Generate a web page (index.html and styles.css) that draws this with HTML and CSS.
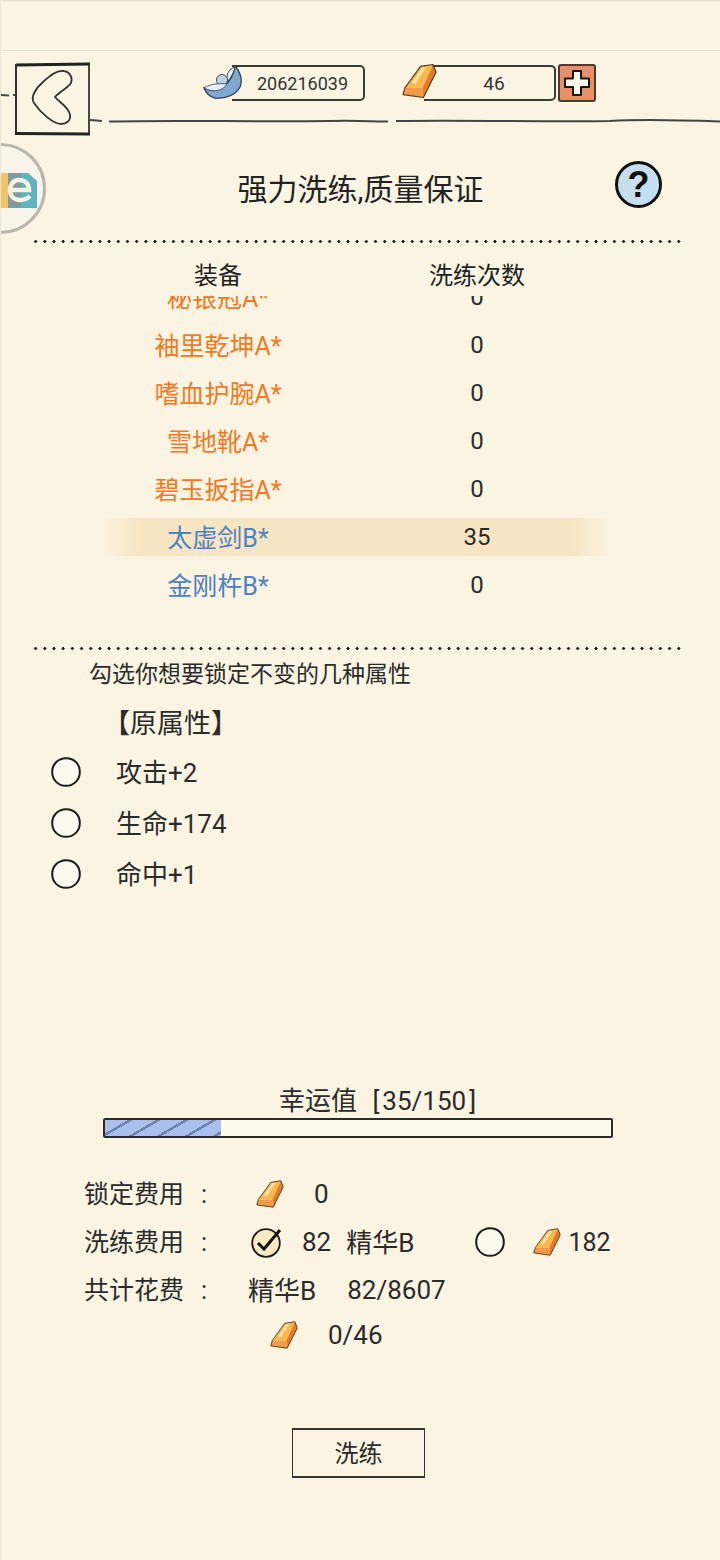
FILE: index.html
```html
<!DOCTYPE html>
<html lang="zh-CN">
<head>
  <meta charset="UTF-8" />
  <meta name="viewport" content="width=device-width, initial-scale=1" />
  <title>强力洗练</title>
  <link rel="stylesheet" href="styles.css">
</head>
<body>
  <svg class="defs" width="0" height="0" aria-hidden="true">
    <symbol id="ingot" viewBox="0 0 36 36">
      <path d="M3 25 L19 3 L32 1 L21 25 Z" fill="#f9b84a" />
      <path d="M10 20 L21 4 L25 3.5 L14 21 Z" fill="#fde2a0" />
      <path d="M32 1 L35 9 L22 35 L21 25 Z" fill="#e57a2e" />
      <path d="M3 25 L21 25 L22 35 L1 32 Z" fill="#f29a4a" />
      <path d="M3 25 L19 3 L32 1 L35 9 L22 35 L1 32 Z" fill="none" stroke="#5c3c1c" stroke-width="1.2" stroke-linejoin="round" />
    </symbol>
    <symbol id="ring" viewBox="0 0 30 30">
      <path d="M15 1.2 C23 1 28.8 7 28.8 15 C28.8 23 23 28.8 15 28.8 C7 28.8 1.2 23 1.2 15 C1.2 7 7 1.4 15 1.2 Z" fill="#fdf9ef" stroke="#1c1c1c" stroke-width="2" />
    </symbol>
  </svg>

  <div class="status"></div>

  <!-- floating tab on the left edge -->
  <div class="float-tab">
    <svg width="46" height="40" viewBox="0 0 46 40">
      <rect x="0" y="3" width="8" height="35" fill="#f2c268" />
      <path d="M8 3 H28 L37 11 V38 H8 Z" fill="#5fb3bf" />
      <path d="M8 3 H21 V38 H8 Z" fill="#7d9ba0" />
      <path d="M12 20 H29 C29 12 23 10 19 10 C13 10 10 15 10 20 C10 26 14 30 20 30 C24 30 27 29 30 26" fill="none" stroke="#f7f3e6" stroke-width="4.5" />
    </svg>
  </div>

  <header class="topbar">
    <svg class="stub" width="15" height="72" viewBox="0 0 15 72">
      <path d="M0 33 L9 33.5 M13 33 L15 33" stroke="#444" stroke-width="2" fill="none" />
    </svg>
    <svg class="back" width="75" height="74" viewBox="0 0 75 74">
      <path d="M1 3 L75 2" stroke="#222" stroke-width="3" />
      <path d="M1 2 L1 72" stroke="#333" stroke-width="2" />
      <path d="M74 2 L74 72" stroke="#333" stroke-width="1.8" />
      <path d="M0 71.5 L75 72" stroke="#222" stroke-width="3" />
      <path d="M28 20 C36 12 44 8 49 9 C55 10 58 16 56 21 C53 26 44 30 40 35 C44 40 54 45 55 53 C56 59 51 62 46 62 C38 62 25 50 19 41 C15 35 21 26 28 20 Z" fill="none" stroke="#333" stroke-width="1.8" />
    </svg>
    <div class="topbar-main">
      <div class="currencies">
        <svg class="silver" width="39" height="36" viewBox="0 0 39 36">
          <path d="M1 23 C8 27 20 24 26 16 C29 12 31 6 32 1 C37 6 40 15 37 22 C33 30 22 34 12 33 C7 32 3 28 1 23 Z" fill="#7fa9d0" stroke="#2c3f55" stroke-width="1.3" />
          <path d="M32 2 C26 4 23 9 24 17 C28 13 31 7 32 2 Z" fill="#eef5f9" stroke="#2c3f55" stroke-width="1" />
          <circle cx="19" cy="15" r="5.5" fill="#bcd3e6" stroke="#3a5068" stroke-width="1" />
          <path d="M1 23 C7 19 16 18 24 19 C20 26 10 28 1 23 Z" fill="#e4eff6" stroke="#2c3f55" stroke-width="0.8" />
        </svg>
        <div class="pill pill-silver">206216039</div>
        <svg class="gold"><use href="#ingot" /></svg>
        <div class="pill pill-gold">46</div>
        <div class="plus">
          <svg width="28" height="28" viewBox="0 0 28 28">
            <path d="M10 2 H18 V9.5 H26 V18 H18 V26 H10 V18 H2 V9.5 H10 Z" fill="#fdf9ef" stroke="#161616" stroke-width="2" stroke-linejoin="round" />
          </svg>
        </div>
      </div>
      <svg class="hand-line" width="630" height="8" viewBox="0 0 630 8">
        <path d="M0 3 L12 4 M19 4.5 C90 3 160 5 240 4 C270 3 285 5 298 4.5 M306 4 C380 3 460 5 520 4 C550 2 590 3 630 4.5" fill="none" stroke="#444" stroke-width="2" />
      </svg>
    </div>
  </header>

  <section class="title-row">
    <h1>强力洗练,质量保证</h1>
    <div class="help">?</div>
  </section>

  <div class="dots"></div>

  <div class="table-head">
    <span>装备</span>
    <span>洗练次数</span>
  </div>

  <div class="equip-list">
    <div class="equip-inner">
      <div class="equip-row rank-a"><span>秘银冠A*</span><b>0</b></div>
      <div class="equip-row rank-a"><span>袖里乾坤A*</span><b>0</b></div>
      <div class="equip-row rank-a"><span>嗜血护腕A*</span><b>0</b></div>
      <div class="equip-row rank-a"><span>雪地靴A*</span><b>0</b></div>
      <div class="equip-row rank-a"><span>碧玉扳指A*</span><b>0</b></div>
      <div class="equip-row rank-b active"><span>太虚剑B*</span><b>35</b></div>
      <div class="equip-row rank-b"><span>金刚杵B*</span><b>0</b></div>
    </div>
  </div>

  <div class="dots dots-second"></div>

  <p class="hint">勾选你想要锁定不变的几种属性</p>
  <h2 class="attr-title">【原属性】</h2>

  <ul class="attrs">
    <li><svg class="radio"><use href="#ring" /></svg><span>攻击+2</span></li>
    <li><svg class="radio"><use href="#ring" /></svg><span>生命+174</span></li>
    <li><svg class="radio"><use href="#ring" /></svg><span>命中+1</span></li>
  </ul>

  <section class="luck">
    <div class="luck-label">幸运值 <span class="bracket">[</span>35/150<span class="bracket">]</span></div>
    <div class="luck-bar"><div class="luck-fill" style="width: 23%"></div></div>
  </section>

  <section class="costs">
    <div class="cost-row">
      <span class="cost-label">锁定费用<span class="colon">:</span></span>
      <svg class="mini-ingot m-lock"><use href="#ingot" /></svg>
      <span class="v-lock">0</span>
    </div>
    <div class="cost-row">
      <span class="cost-label">洗练费用<span class="colon">:</span></span>
      <svg class="radio m-check" viewBox="0 0 32 32">
        <circle cx="15" cy="17" r="13.8" fill="#fbe9c2" stroke="#1c1c1c" stroke-width="1.8" />
        <path d="M7 17 L13 23 L29 4" fill="none" stroke="#111" stroke-width="3" />
      </svg>
      <span class="v-num">82</span>
      <span class="v-name">精华B</span>
      <svg class="radio m-alt"><use href="#ring" /></svg>
      <svg class="mini-ingot m-alt-ingot"><use href="#ingot" /></svg>
      <span class="v-alt">182</span>
    </div>
    <div class="cost-row">
      <span class="cost-label">共计花费<span class="colon">:</span></span>
      <span class="v-name-total">精华B</span>
      <span class="v-total">82/8607</span>
    </div>
    <div class="cost-row cost-last">
      <svg class="mini-ingot"><use href="#ingot" /></svg>
      <span class="v-gold">0/46</span>
    </div>
  </section>

  <div class="action">
    <button class="wash-btn">洗练</button>
  </div>
</body>
</html>
```

FILE: styles.css
```css
* { margin: 0; padding: 0; box-sizing: border-box; }
body {
  width: 720px;
  height: 1560px;
  overflow: hidden;
  position: relative;
  font-family: Roboto, "Noto Sans CJK SC", sans-serif;
  background: #fbf4e3;
  color: #2b2b2b;
  border-left: 1px solid #eee6d4;
  border-top: 1px solid #e6decb;
}
.defs { position: absolute; }
.status {
  height: 50px;
  border-bottom: 1px solid #e8e1d0;
}

/* top bar */
.topbar {
  display: flex;
  height: 89px;
  padding-top: 11px;
  margin-left: -1px;
}
.stub { flex: none; }
.back { flex: none; }
.topbar-main {
  flex: 1;
  display: flex;
  flex-direction: column;
}
.currencies {
  display: flex;
  align-items: flex-start;
  height: 55px;
  padding-top: 3px;
  padding-left: 113px;
}
.silver { flex: none; position: relative; z-index: 1; }
.pill {
  height: 36px;
  line-height: 34px;
  font-size: 18px;
  text-align: center;
  color: #333;
  border-top: 2.5px solid #3c3c3c;
  border-bottom: 2.5px solid #3c3c3c;
  border-right: 2.5px solid #3c3c3c;
  border-radius: 0 5px 5px 0;
}
.pill-silver { width: 133px; margin-left: -10px; padding-left: 10px; }
.gold {
  flex: none;
  width: 35px;
  height: 36px;
  margin-left: 37px;
  margin-top: -2px;
  position: relative;
  z-index: 1;
}
.pill-gold { width: 132px; margin-left: -13px; padding-left: 10px; font-size: 19px; }
.plus {
  width: 38px;
  height: 38px;
  margin-left: 2px;
  margin-top: -1px;
  background: #e88f67;
  border: 2px solid #4a3a32;
  border-radius: 3px;
  display: flex;
  align-items: center;
  justify-content: center;
}
.hand-line { display: block; }

/* floating tab */
.float-tab {
  position: absolute;
  left: -46px;
  top: 142px;
  width: 91px;
  height: 91px;
  border-radius: 50%;
  background: #f9f4e9;
  border: 3px solid #b9b6ae;
  z-index: 5;
}
.float-tab svg {
  position: absolute;
  left: 42px;
  top: 24px;
}

/* title */
.title-row {
  display: grid;
  grid-template-columns: 1fr auto 1fr;
  align-items: center;
  height: 100px;
}
.title-row h1 {
  grid-column: 2;
  font-size: 30px;
  font-weight: 400;
  line-height: 100px;
  color: #222;
}
.help {
  grid-column: 3;
  justify-self: end;
  width: 47px;
  height: 47px;
  margin-right: 58px;
  margin-bottom: 12px;
  border-radius: 50%;
  border: 3px solid #111;
  background: #c6dfee;
  font-family: "Liberation Sans", sans-serif;
  font-size: 36px;
  font-weight: 700;
  line-height: 41px;
  text-align: center;
  color: #111;
}

.dots {
  width: 652px;
  height: 3px;
  margin-left: 30px;
  background-image: radial-gradient(circle, #222 1.3px, transparent 1.7px);
  background-size: 9.2px 3px;
}
.dots-second { margin-top: 27px; }

/* equipment table */
.table-head,
.equip-row {
  display: grid;
  grid-template-columns: 434px 84px;
  text-align: center;
  white-space: nowrap;
}
.table-head {
  height: 53px;
  padding-top: 13px;
  font-size: 24px;
  line-height: 40px;
  color: #222;
}
.table-head span:last-child { margin: 0 -20px; }
.equip-list {
  height: 324px;
  overflow: hidden;
}
.equip-inner { margin-top: -23px; }
.equip-row {
  height: 48px;
  font-size: 25px;
  line-height: 48px;
}
.equip-row span { padding-top: 2px; }
.equip-row b { font-size: 24px; font-weight: 400; color: #2b2b2b; }
.rank-a span { color: #ee7a24; }
.rank-b span { color: #4f80c0; }
.equip-row.active {
  background: linear-gradient(90deg, transparent, #f6e5c2 8%, #f6e5c2 92%, transparent) 99px 5px / 512px 38px no-repeat;
}

/* locked attributes */
.hint {
  height: 49px;
  padding-top: 1px;
  padding-left: 88px;
  font-size: 23px;
  line-height: 48px;
}
.attr-title {
  height: 47px;
  padding-left: 102px;
  font-size: 27px;
  font-weight: 400;
  line-height: 50px;
}
.attrs {
  list-style: none;
  height: 337px;
}
.attrs li {
  display: flex;
  align-items: center;
  height: 51px;
  padding-left: 50px;
  font-size: 26px;
}
.attrs li span { margin-left: 35px; margin-top: -2px; }
.radio {
  flex: none;
  width: 30px;
  height: 30px;
}

/* luck bar */
.luck-label {
  height: 35px;
  padding-left: 278px;
  font-size: 26px;
  line-height: 36px;
  word-spacing: 6px;
}
.bracket { margin: 0 3px; }
.luck-bar {
  width: 510px;
  height: 20px;
  margin-left: 102px;
  background: #fdf9ef;
  border: 2px solid #2b2b2b;
  border-top-width: 2.5px;
  border-bottom-width: 2.5px;
  border-radius: 2px;
}
.luck-fill {
  height: 100%;
  background: repeating-linear-gradient(150deg, #a9c0ee 0 11.5px, #6f83ab 11.5px 14px);
}

/* costs */
.costs {
  margin-top: 32px;
  padding-left: 83px;
}
.cost-row {
  display: flex;
  align-items: center;
  height: 48px;
  font-size: 25px;
}
.cost-label { width: 164px; flex: none; margin-top: -4px; }
.colon { margin-left: 17px; }
.mini-ingot {
  flex: none;
  width: 28px;
  height: 28px;
}
.m-lock { margin-left: 8px; }
.v-lock { margin-left: 30px; font-size: 26px; }
.m-check { margin-left: 3px; width: 32px; height: 32px; }
.v-num { margin-left: 19px; font-size: 26px; }
.v-name { margin-left: 15px; margin-top: -4px; font-size: 26px; }
.v-name-total { margin-top: -4px; font-size: 26px; }
.m-alt { margin-left: 61px; }
.m-alt-ingot { margin-left: 28px; }
.v-alt { margin-left: 7px; }
.v-total { margin-left: 31px; font-size: 26px; }
.cost-last { margin-top: -3px; padding-left: 186px; }
.v-gold { margin-left: 30px; font-size: 26px; }

/* action */
.action { margin-top: 69px; padding-left: 291px; }
.wash-btn {
  display: block;
  width: 133px;
  height: 50px;
  padding-bottom: 4px;
  background: transparent;
  border: 1.5px solid #333;
  border-top-width: 2px;
  border-bottom-width: 2.5px;
  font: inherit;
  font-size: 24px;
  color: #2b2b2b;
}
```
